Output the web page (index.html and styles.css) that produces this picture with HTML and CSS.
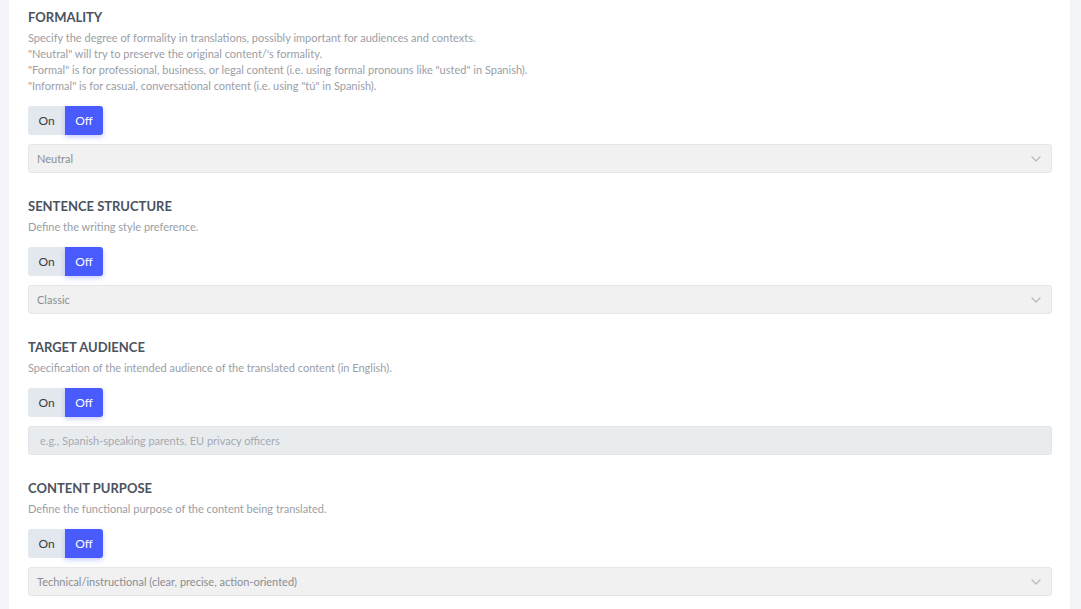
FILE: index.html
```html
<!DOCTYPE html>
<html lang="en">
<head>
<meta charset="utf-8">
<title>Translation settings</title>
<link rel="stylesheet" href="styles.css">
</head>
<body>
<div class="panel">
  <section class="setting">
    <h2 class="setting-title">FORMALITY</h2>
    <div class="setting-desc">
      <p>Specify the degree of formality in translations, possibly important for audiences and contexts.</p>
      <p>"Neutral" will try to preserve the original content/'s formality.</p>
      <p>"Formal" is for professional, business, or legal content (i.e. using formal pronouns like "usted" in Spanish).</p>
      <p>"Informal" is for casual, conversational content (i.e. using "tú" in Spanish).</p>
    </div>
    <div class="toggle"><span class="toggle-btn">On</span><span class="toggle-btn active">Off</span></div>
    <div class="select"><span>Neutral</span><svg class="chev" viewBox="0 0 10 6" width="10" height="6"><path d="M1 1l4 4 4-4" fill="none" stroke="currentColor" stroke-width="1.2" stroke-linecap="round" stroke-linejoin="round"/></svg></div>
  </section>
  <section class="setting">
    <h2 class="setting-title">SENTENCE STRUCTURE</h2>
    <div class="setting-desc"><p>Define the writing style preference.</p></div>
    <div class="toggle"><span class="toggle-btn">On</span><span class="toggle-btn active">Off</span></div>
    <div class="select"><span>Classic</span><svg class="chev" viewBox="0 0 10 6" width="10" height="6"><path d="M1 1l4 4 4-4" fill="none" stroke="currentColor" stroke-width="1.2" stroke-linecap="round" stroke-linejoin="round"/></svg></div>
  </section>
  <section class="setting">
    <h2 class="setting-title">TARGET AUDIENCE</h2>
    <div class="setting-desc"><p>Specification of the intended audience of the translated content (in English).</p></div>
    <div class="toggle"><span class="toggle-btn">On</span><span class="toggle-btn active">Off</span></div>
    <input class="text-input" type="text" placeholder="e.g., Spanish-speaking parents, EU privacy officers" disabled>
  </section>
  <section class="setting">
    <h2 class="setting-title">CONTENT PURPOSE</h2>
    <div class="setting-desc"><p>Define the functional purpose of the content being translated.</p></div>
    <div class="toggle"><span class="toggle-btn">On</span><span class="toggle-btn active">Off</span></div>
    <div class="select"><span>Technical/instructional (clear, precise, action-oriented)</span><svg class="chev" viewBox="0 0 10 6" width="10" height="6"><path d="M1 1l4 4 4-4" fill="none" stroke="currentColor" stroke-width="1.2" stroke-linecap="round" stroke-linejoin="round"/></svg></div>
  </section>
</div>
</body>
</html>
```
FILE: styles.css
```css
html, body {
  margin: 0;
  padding: 0;
  height: 100%;
}
body {
  background: #f4f5f9;
  font-family: Lato, "Noto Sans", sans-serif;
  overflow: hidden;
}
.panel {
  margin-left: 9px;
  width: 1061px;
  min-height: 100%;
  background: #ffffff;
  box-sizing: border-box;
  padding: 9px 18px 0 19px;
  display: flex;
  flex-direction: column;
  gap: 25px;
}
.setting {
  display: flex;
  flex-direction: column;
}
.setting-title {
  margin: 0;
  font-size: 13px;
  line-height: 16px;
  font-weight: 700;
  color: #4b5260;
}
.setting-desc {
  margin-top: 5px;
  margin-bottom: 12px;
  font-size: 11px;
  line-height: 16px;
  color: #9a9ea6;
}
.setting-desc p {
  margin: 0;
}
.toggle {
  display: flex;
  align-self: flex-start;
  height: 29px;
  border-radius: 3px;
}
.toggle-btn {
  display: flex;
  align-items: center;
  justify-content: center;
  font-size: 12px;
  color: #3a3d44;
  background: #e3e8ee;
}
.toggle-btn:first-child {
  width: 37px;
  border-radius: 3px 0 0 3px;
}
.toggle-btn.active {
  width: 38px;
  background: #4a5bfd;
  color: #ffffff;
  border-radius: 0 3px 3px 0;
  box-shadow: 0 2px 5px rgba(74, 91, 253, 0.3);
}
.select {
  margin-top: 9px;
  height: 29px;
  box-sizing: border-box;
  display: flex;
  align-items: center;
  justify-content: space-between;
  padding: 0 10px 0 8px;
  background: #f1f1f1;
  border: 1px solid #e6e6e6;
  border-radius: 3px;
  font-size: 11px;
  color: #8a8d93;
}
.chev {
  color: #b8b8b8;
}
.text-input {
  margin-top: 9px;
  height: 29px;
  box-sizing: border-box;
  width: 100%;
  padding: 0 11px;
  background: #e9ecef;
  border: 1px solid #e2e5e9;
  border-radius: 3px;
  font-family: inherit;
  font-size: 11px;
  color: #8a8d93;
  outline: none;
}
.text-input::placeholder {
  color: #a5a9af;
}
```
